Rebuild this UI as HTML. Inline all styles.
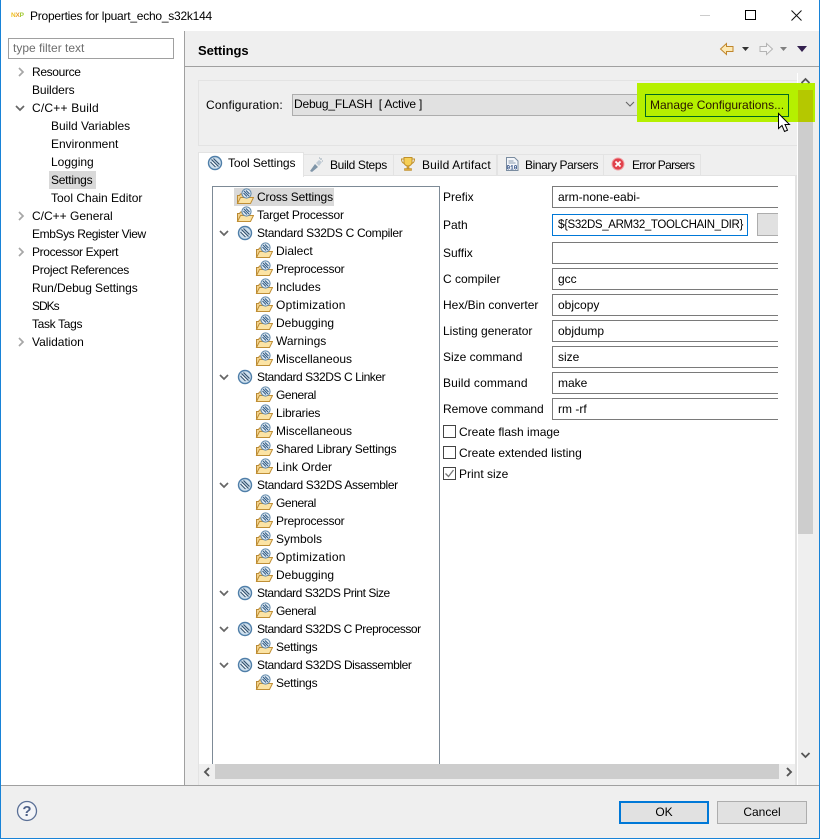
<!DOCTYPE html>
<html><head><meta charset="utf-8"><style>
html,body{margin:0;padding:0;background:#fff}
#w{position:relative;width:820px;height:839px;overflow:hidden;background:#fff;font:12px/18px "Liberation Sans",Arial,sans-serif;color:#000}
#w div,#w svg{position:absolute}
.t{white-space:nowrap;height:18px}
.b{box-sizing:border-box}
.i{box-sizing:border-box;left:552px;width:226px;height:22px;border:1px solid #7a7a7a;border-right:0;background:#fff;padding-left:5px;line-height:20px;white-space:nowrap;overflow:hidden}
.c{box-sizing:border-box;left:443px;width:13px;height:13px;border:1px solid #444;background:#fff}
.tab{box-sizing:border-box;top:154px;height:21px;background:#efefef;border:1px solid #e3e3e3;border-bottom:0;line-height:20px;white-space:nowrap}
</style></head><body><div id="w">
<svg width="0" height="0"><defs>
<symbol id="f" viewBox="0 0 18 17"><path d="M1.500 15.500V7.500h2l1-1.500h4v9.500z" fill="#f3d28c" stroke="#b98a35"/><path d="M1.500 15.500l3-6h13l-3 6z" fill="#fbe3a4" stroke="#c08f36"/><circle cx="10.500" cy="5.500" r="4.600" fill="#dfe9f3" stroke="#5d86a8"/><path d="M8 3l5 5M10 2.500l3.500 3.500M7.500 5l3.500 3.500" stroke="#2f5a82" stroke-width="1"/></symbol>
<symbol id="g" viewBox="0 0 16 16"><circle cx="8" cy="8" r="6.500" fill="#cfe0ee" stroke="#4f7ea8" stroke-width="1.400"/><path d="M4.500 4.500l7 7M6.500 3.500l6 6M3.500 7l5 5" stroke="#33506c" stroke-width="1.100"/><path d="M5 7l4 4" stroke="#fff" stroke-width="1"/></symbol>
<symbol id="r" viewBox="0 0 10 10"><path d="M3 1l4 4-4 4" fill="none" stroke="#a6a6a6" stroke-width="1.700"/></symbol>
<symbol id="d" viewBox="0 0 10 10"><path d="M1 3l4 4 4-4" fill="none" stroke="#666" stroke-width="1.700"/></symbol>
</defs></svg>

<!-- window frame -->
<div style="left:0;top:0;width:1px;height:839px;background:#1883d7"></div>
<div style="left:819px;top:0;width:1px;height:839px;background:#1883d7"></div>
<div style="left:0;top:838px;width:820px;height:1px;background:#1883d7"></div>

<!-- title bar -->
<div class="t" style="left:11px;top:11px;font:bold 6.500px/10px 'Liberation Sans',sans-serif;height:10px;letter-spacing:-.2px"><span style="color:#f0c020">N</span><span style="color:#e8a030">X</span><span style="color:#a0c830">P</span></div>
<div class="t" style="left:30px;top:7px;letter-spacing:-.24px">Properties for lpuart_echo_s32k144</div>
<div style="left:700px;top:15px;width:10px;height:1px;background:#ccc"></div>
<div class="b" style="left:745px;top:10px;width:11px;height:10px;border:1px solid #000"></div>
<svg style="left:791px;top:10px" width="11" height="11"><path d="M.5.5l10 10M10.500.5l-10 10" stroke="#111" stroke-width="1"/></svg>

<!-- main panels -->
<div style="left:185px;top:31px;width:634px;height:754px;background:#efefef"></div>
<div style="left:184px;top:31px;width:1px;height:754px;background:#a0a0a0"></div>
<div style="left:185px;top:66px;width:634px;height:1px;background:#a0a0a0"></div>
<div style="left:1px;top:785px;width:818px;height:1px;background:#a0a0a0"></div>
<div style="left:1px;top:786px;width:818px;height:52px;background:#efefef"></div>

<!-- left tree -->
<div class="b t" style="left:8px;top:38px;width:166px;height:21px;border:1px solid #a0a0a0;padding-left:4px;line-height:19px;color:#6d6d6d">type filter text</div>
<svg style="left:16px;top:67px" width="10" height="10"><use href="#r"/></svg>
<svg style="left:15px;top:103px" width="10" height="10"><use href="#d"/></svg>
<svg style="left:16px;top:211px" width="10" height="10"><use href="#r"/></svg>
<svg style="left:16px;top:247px" width="10" height="10"><use href="#r"/></svg>
<svg style="left:16px;top:337px" width="10" height="10"><use href="#r"/></svg>
<div style="left:49px;top:171px;width:47px;height:18px;background:#d9d9d9"></div>
<div class="t" style="left:32px;top:63px;letter-spacing:-.35px">Resource</div>
<div class="t" style="left:32px;top:81px;letter-spacing:-.1px">Builders</div>
<div class="t" style="left:32px;top:99px;letter-spacing:.2px">C/C++ Build</div>
<div class="t" style="left:51px;top:117px">Build Variables</div>
<div class="t" style="left:51px;top:135px">Environment</div>
<div class="t" style="left:51px;top:153px">Logging</div>
<div class="t" style="left:51px;top:171px;letter-spacing:-.25px">Settings</div>
<div class="t" style="left:51px;top:189px">Tool Chain Editor</div>
<div class="t" style="left:32px;top:207px">C/C++ General</div>
<div class="t" style="left:32px;top:225px;letter-spacing:-.4px">EmbSys Register View</div>
<div class="t" style="left:32px;top:243px;letter-spacing:-.37px">Processor Expert</div>
<div class="t" style="left:32px;top:261px;letter-spacing:-.28px">Project References</div>
<div class="t" style="left:32px;top:279px;letter-spacing:-.1px">Run/Debug Settings</div>
<div class="t" style="left:32px;top:297px;letter-spacing:-1px">SDKs</div>
<div class="t" style="left:32px;top:315px;letter-spacing:-.33px">Task Tags</div>
<div class="t" style="left:32px;top:333px">Validation</div>

<!-- header -->
<div class="t" style="left:198px;top:42px;font-weight:bold;font-size:13px;letter-spacing:-.1px">Settings</div>
<svg style="left:719px;top:42px" width="16" height="14"><path d="M7.500 1.500L1.500 7l6 5.500V9.500h6.500v-5H7.500z" fill="#fde9b4" stroke="#c0862c"/></svg>
<svg style="left:741px;top:46px" width="9" height="6"><path d="M1 1h7L4.500 5z" fill="#333"/></svg>
<svg style="left:758px;top:42px" width="16" height="14"><path d="M8.500 1.500L14.500 7l-6 5.500V9.500H2v-5h6.500z" fill="#f4f4f4" stroke="#b4b4b4"/></svg>
<svg style="left:779px;top:46px" width="9" height="6"><path d="M1 1h7L4.500 5z" fill="#808080"/></svg>
<svg style="left:797px;top:46px" width="11" height="6"><path d="M0 0h10L5 6z" fill="#33204f"/></svg>

<!-- white strip + scrollbar -->
<div style="left:797px;top:73px;width:1px;height:712px;background:#fff"></div>
<div style="left:798px;top:90px;width:15px;height:444px;background:#cdcdcd"></div>

<!-- config group -->
<div class="b" style="left:198px;top:80px;width:599px;height:66px;border:1px solid #e3e3e3;border-right:0"></div>
<div class="t" style="left:206px;top:96px;letter-spacing:.15px">Configuration:</div>
<div class="b t" style="left:292px;top:94px;width:346px;height:22px;background:#e1e1e1;border:1px solid #adadad;padding-left:1px;line-height:19px;letter-spacing:-.2px">Debug_FLASH&nbsp; [ Active ]</div>
<svg style="left:625px;top:101px" width="10" height="7"><path d="M1 1l4 4 4-4" fill="none" stroke="#666" stroke-width="1.100"/></svg>

<!-- highlight -->
<div style="left:637px;top:83px;width:178px;height:39px;background:#b5f000"></div>
<div style="left:798px;top:90px;width:15px;height:32px;background:#b5c800"></div>
<svg style="left:800px;top:76px" width="11" height="9"><path d="M1.500 7l4-4 4 4" fill="none" stroke="#555" stroke-width="1.800"/></svg>
<div class="b t" style="left:645px;top:94px;width:144px;height:23px;border:1px solid #006a20;padding-left:4px;line-height:21px;color:#2a1500">Manage Configurations...</div>
<svg style="left:777px;top:112px" width="15" height="22"><path d="M1.500 1.500v15l3.500-3 2.500 6 3-1.300-2.500-5.700h4.500z" fill="#fff" stroke="#000"/></svg>

<!-- tab panel -->
<div class="b" style="left:198px;top:175px;width:599px;height:610px;border-left:1px solid #e3e3e3;border-top:1px solid #e3e3e3;border-right:2px solid #e3e3e3;background:#fff"></div>
<div class="tab" style="left:303px;width:91px;padding-left:26px;letter-spacing:-.35px">Build Steps</div>
<div class="tab" style="left:393px;width:104px;padding-left:28px;letter-spacing:.15px">Build Artifact</div>
<div class="tab" style="left:497px;width:107px;padding-left:27px;letter-spacing:-.4px">Binary Parsers</div>
<div class="tab" style="left:603px;width:98px;padding-left:28px;letter-spacing:-.7px">Error Parsers</div>
<div class="b" style="left:198px;top:152px;width:106px;height:25px;background:#fff;border:1px solid #e3e3e3;border-bottom:0"></div>
<div class="t" style="left:228px;top:154px;letter-spacing:-.1px">Tool Settings</div>
<svg style="left:207px;top:155px" width="16" height="16"><use href="#g"/></svg>
<svg style="left:308px;top:157px" width="16" height="16"><path d="M2 14l5-7 3 3-6 5z" fill="#7f95a8"/><path d="M8 6l3-3 3 2-3 4z" fill="#c0cbd5"/><path d="M12 2h2M14 4h1M11 1h1" stroke="#9aa8b5"/></svg>
<svg style="left:400px;top:156px" width="16" height="16"><path d="M4 1.500h8v5c0 2-2 3.500-4 3.500S4 8.500 4 6.500z" fill="#f6cf55" stroke="#c0902a"/><path d="M4 3H1.500c0 3 1 4 3 4.500M12 3h2.500c0 3-1 4-3 4.500" fill="none" stroke="#c0902a"/><path d="M7 10h2v2H7zM4.500 12.500h7v2h-7z" fill="#e0aa38" stroke="#b88a2c" stroke-width=".6"/></svg>
<svg style="left:505px;top:156px" width="15" height="16"><path d="M1.500 1.500h8l3.500 3.500v9.500H1.500z" fill="#f4f6fa" stroke="#7a8ca0"/><path d="M3.500 5h5M3.500 7h7" stroke="#8a9cb0"/><text x="1.500" y="13.500" font-family="Liberation Mono,monospace" font-size="6" font-weight="bold" fill="#2a4a80">010</text></svg>
<svg style="left:611px;top:157px" width="14" height="14"><circle cx="7" cy="7" r="6" fill="#e0404a" stroke="#f2a0a4"/><path d="M4.500 4.500l5 5M9.500 4.500l-5 5" stroke="#fff" stroke-width="1.800"/></svg>

<!-- tree box -->
<div class="b" style="left:212px;top:186px;width:228px;height:578px;border:1px solid #7d8a96;border-bottom:0;background:#fff"></div>
<div style="left:234px;top:188px;width:100px;height:18px;background:#d9d9d9"></div>

<svg style="left:236px;top:188px" width="18" height="17"><use href="#f"/></svg><div class="t" style="left:257px;top:188px;letter-spacing:-.15px">Cross Settings</div>
<svg style="left:236px;top:206px" width="18" height="17"><use href="#f"/></svg><div class="t" style="left:257px;top:206px;letter-spacing:-.25px">Target Processor</div>

<svg style="left:219px;top:228px" width="10" height="10"><use href="#d"/></svg>
<svg style="left:237px;top:225px" width="16" height="16"><use href="#g"/></svg><div class="t" style="left:257px;top:224px;letter-spacing:-.32px">Standard S32DS C Compiler</div>
<svg style="left:255px;top:242px" width="18" height="17"><use href="#f"/></svg><div class="t" style="left:276px;top:242px">Dialect</div>
<svg style="left:255px;top:260px" width="18" height="17"><use href="#f"/></svg><div class="t" style="left:276px;top:260px;letter-spacing:-.25px">Preprocessor</div>
<svg style="left:255px;top:278px" width="18" height="17"><use href="#f"/></svg><div class="t" style="left:276px;top:278px">Includes</div>
<svg style="left:255px;top:296px" width="18" height="17"><use href="#f"/></svg><div class="t" style="left:276px;top:296px;letter-spacing:.25px">Optimization</div>
<svg style="left:255px;top:314px" width="18" height="17"><use href="#f"/></svg><div class="t" style="left:276px;top:314px">Debugging</div>
<svg style="left:255px;top:332px" width="18" height="17"><use href="#f"/></svg><div class="t" style="left:276px;top:332px">Warnings</div>
<svg style="left:255px;top:350px" width="18" height="17"><use href="#f"/></svg><div class="t" style="left:276px;top:350px">Miscellaneous</div>

<svg style="left:219px;top:372px" width="10" height="10"><use href="#d"/></svg>
<svg style="left:237px;top:369px" width="16" height="16"><use href="#g"/></svg><div class="t" style="left:257px;top:368px;letter-spacing:-.43px">Standard S32DS C Linker</div>
<svg style="left:255px;top:386px" width="18" height="17"><use href="#f"/></svg><div class="t" style="left:276px;top:386px;letter-spacing:-.4px">General</div>
<svg style="left:255px;top:404px" width="18" height="17"><use href="#f"/></svg><div class="t" style="left:276px;top:404px;letter-spacing:-.2px">Libraries</div>
<svg style="left:255px;top:422px" width="18" height="17"><use href="#f"/></svg><div class="t" style="left:276px;top:422px">Miscellaneous</div>
<svg style="left:255px;top:440px" width="18" height="17"><use href="#f"/></svg><div class="t" style="left:276px;top:440px;letter-spacing:-.22px">Shared Library Settings</div>
<svg style="left:255px;top:458px" width="18" height="17"><use href="#f"/></svg><div class="t" style="left:276px;top:458px">Link Order</div>

<svg style="left:219px;top:480px" width="10" height="10"><use href="#d"/></svg>
<svg style="left:237px;top:477px" width="16" height="16"><use href="#g"/></svg><div class="t" style="left:257px;top:476px;letter-spacing:-.36px">Standard S32DS Assembler</div>
<svg style="left:255px;top:494px" width="18" height="17"><use href="#f"/></svg><div class="t" style="left:276px;top:494px;letter-spacing:-.4px">General</div>
<svg style="left:255px;top:512px" width="18" height="17"><use href="#f"/></svg><div class="t" style="left:276px;top:512px;letter-spacing:-.25px">Preprocessor</div>
<svg style="left:255px;top:530px" width="18" height="17"><use href="#f"/></svg><div class="t" style="left:276px;top:530px">Symbols</div>
<svg style="left:255px;top:548px" width="18" height="17"><use href="#f"/></svg><div class="t" style="left:276px;top:548px;letter-spacing:.25px">Optimization</div>
<svg style="left:255px;top:566px" width="18" height="17"><use href="#f"/></svg><div class="t" style="left:276px;top:566px">Debugging</div>

<svg style="left:219px;top:588px" width="10" height="10"><use href="#d"/></svg>
<svg style="left:237px;top:585px" width="16" height="16"><use href="#g"/></svg><div class="t" style="left:257px;top:584px;letter-spacing:-.48px">Standard S32DS Print Size</div>
<svg style="left:255px;top:602px" width="18" height="17"><use href="#f"/></svg><div class="t" style="left:276px;top:602px;letter-spacing:-.4px">General</div>

<svg style="left:219px;top:624px" width="10" height="10"><use href="#d"/></svg>
<svg style="left:237px;top:621px" width="16" height="16"><use href="#g"/></svg><div class="t" style="left:257px;top:620px;letter-spacing:-.45px">Standard S32DS C Preprocessor</div>
<svg style="left:255px;top:638px" width="18" height="17"><use href="#f"/></svg><div class="t" style="left:276px;top:638px;letter-spacing:-.25px">Settings</div>

<svg style="left:219px;top:660px" width="10" height="10"><use href="#d"/></svg>
<svg style="left:237px;top:657px" width="16" height="16"><use href="#g"/></svg><div class="t" style="left:257px;top:656px;letter-spacing:-.43px">Standard S32DS Disassembler</div>
<svg style="left:255px;top:674px" width="18" height="17"><use href="#f"/></svg><div class="t" style="left:276px;top:674px;letter-spacing:-.25px">Settings</div>

<!-- form -->
<div class="t" style="left:443px;top:188px">Prefix</div><div class="i" style="top:186px">arm-none-eabi-</div>
<div class="t" style="left:443px;top:216px">Path</div>
<div class="i" style="top:214px;width:196px;border:1px solid #0078d7;font-size:11.500px;letter-spacing:-.35px">${S32DS_ARM32_TOOLCHAIN_DIR}</div>
<div class="b" style="left:757px;top:213px;width:21px;height:23px;background:#e1e1e1;border:1px solid #adadad;border-right:0"></div>
<div class="t" style="left:443px;top:244px">Suffix</div><div class="i" style="top:242px"></div>
<div class="t" style="left:443px;top:270px">C compiler</div><div class="i" style="top:268px">gcc</div>
<div class="t" style="left:443px;top:296px">Hex/Bin converter</div><div class="i" style="top:294px">objcopy</div>
<div class="t" style="left:443px;top:322px">Listing generator</div><div class="i" style="top:320px">objdump</div>
<div class="t" style="left:443px;top:348px">Size command</div><div class="i" style="top:346px">size</div>
<div class="t" style="left:443px;top:374px;letter-spacing:.15px">Build command</div><div class="i" style="top:372px">make</div>
<div class="t" style="left:443px;top:400px">Remove command</div><div class="i" style="top:398px">rm -rf</div>
<div class="c" style="top:425px"></div><div class="t" style="left:459px;top:423px">Create flash image</div>
<div class="c" style="top:446px"></div><div class="t" style="left:459px;top:444px">Create extended listing</div>
<div class="c" style="top:467px"></div><div class="t" style="left:459px;top:465px">Print size</div>
<svg style="left:444px;top:468px" width="11" height="11"><path d="M1.500 5.500l3 3 5-6.500" fill="none" stroke="#777" stroke-width="1.300"/></svg>

<!-- scroll bars -->
<div style="left:199px;top:764px;width:596px;height:21px;background:#efefef"></div>
<div style="left:215px;top:764px;width:564px;height:15px;background:#cdcdcd"></div>
<svg style="left:202px;top:767px" width="9" height="10"><path d="M7 1L3 5l4 4" fill="none" stroke="#555" stroke-width="1.900"/></svg>
<svg style="left:785px;top:767px" width="9" height="10"><path d="M2 1l4 4-4 4" fill="none" stroke="#555" stroke-width="1.900"/></svg>
<svg style="left:800px;top:751px" width="11" height="9"><path d="M1.500 2l4 4 4-4" fill="none" stroke="#555" stroke-width="1.800"/></svg>

<!-- bottom -->
<svg style="left:16px;top:800px" width="22" height="22"><circle cx="11" cy="11" r="9.500" fill="#f4f5f8" stroke="#5a6f96" stroke-width="1.300"/><text x="11" y="16" text-anchor="middle" font-family="Liberation Sans,sans-serif" font-weight="bold" font-size="15" fill="#4d6088">?</text></svg>
<div class="b t" style="left:619px;top:801px;width:90px;height:23px;background:#e1e1e1;border:2px solid #0078d7;text-align:center;line-height:19px">OK</div>
<div class="b t" style="left:717px;top:801px;width:90px;height:23px;background:#e1e1e1;border:1px solid #adadad;text-align:center;line-height:21px">Cancel</div>
</div></body></html>
